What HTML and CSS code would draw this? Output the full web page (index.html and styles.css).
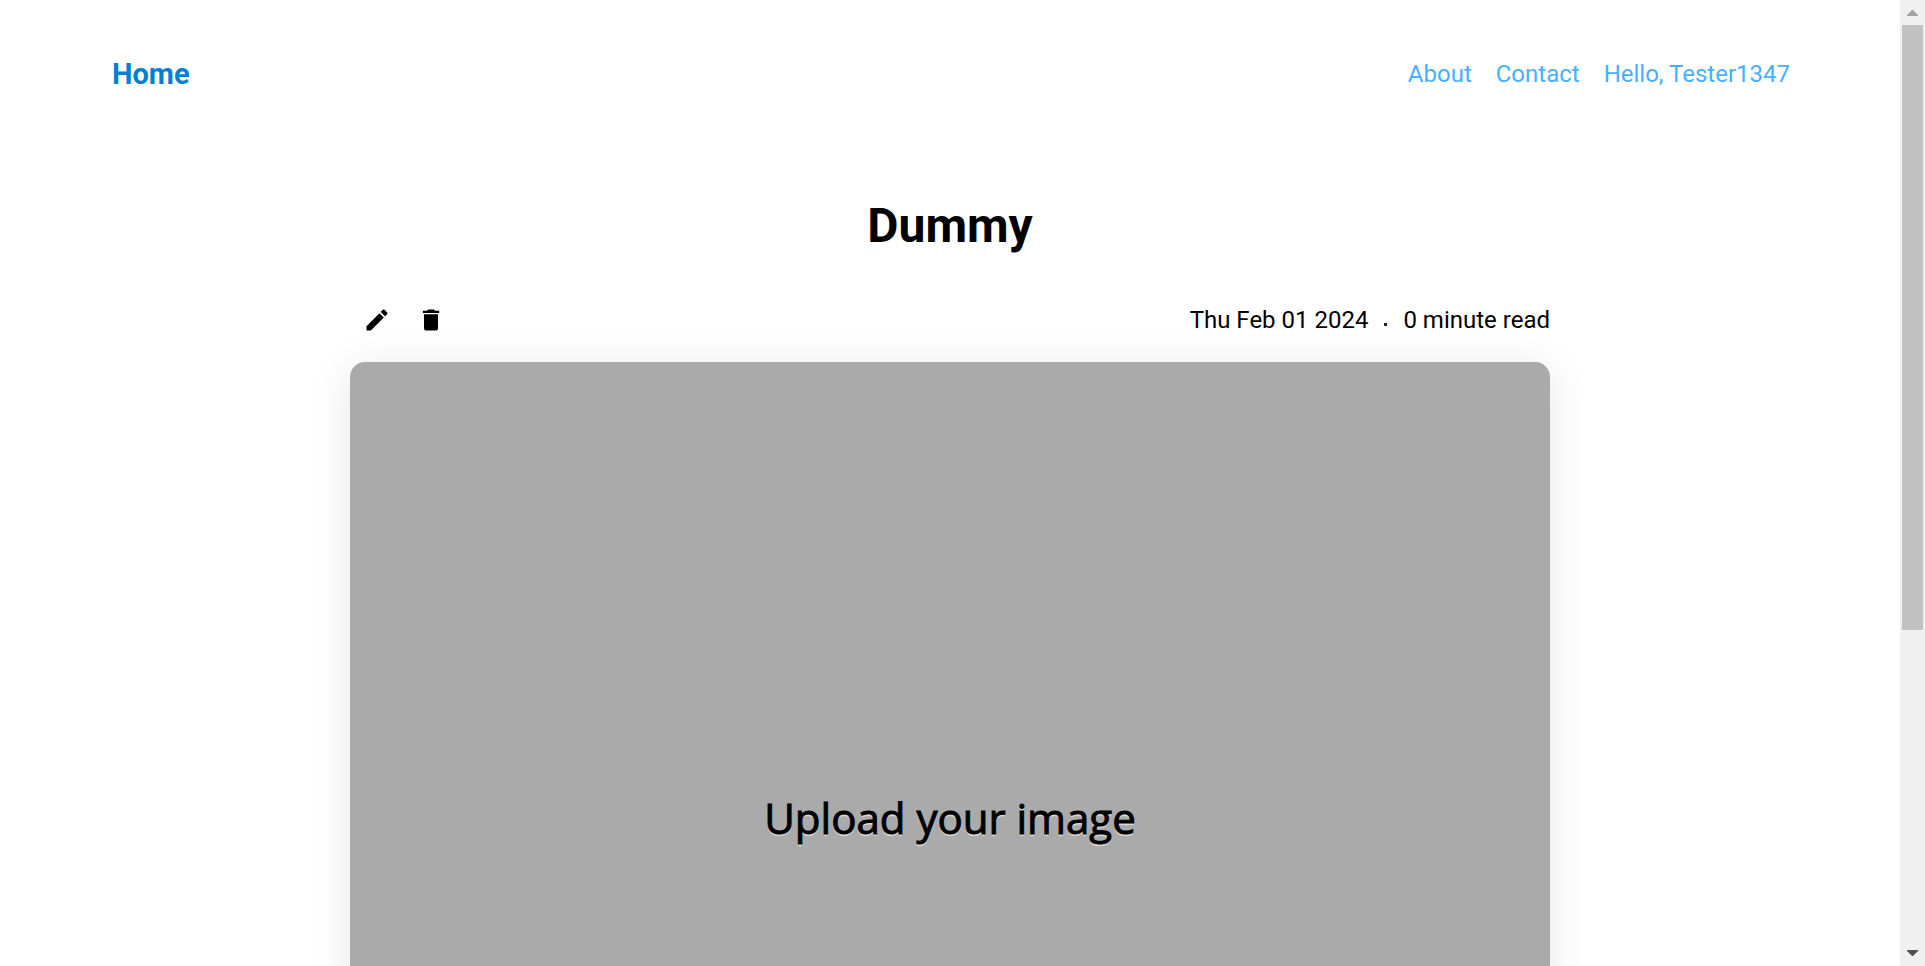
FILE: index.html
```
<!DOCTYPE html>
<html lang="en">
<head>
<meta charset="utf-8">
<title>Dummy</title>
<link rel="stylesheet" href="styles.css">
</head>
<body>
<div class="viewport">
  <div class="page">
    <header class="header">
      <a class="brand" href="#">Home</a>
      <nav class="nav">
        <a href="#">About</a>
        <a href="#">Contact</a>
        <a href="#">Hello, Tester1347</a>
      </nav>
    </header>
    <main class="post">
      <h1 class="title">Dummy</h1>
      <div class="toolbar">
        <div class="actions">
          <button class="icon-button" type="button" aria-label="Edit">
            <svg viewBox="0 0 24 24" aria-hidden="true"><path d="M3 17.25V21h3.75L17.81 9.94l-3.75-3.75L3 17.25zM20.71 7.04c.39-.39.39-1.02 0-1.41l-2.34-2.34c-.39-.39-1.02-.39-1.41 0l-1.83 1.83 3.75 3.75 1.83-1.83z"/></svg>
          </button>
          <button class="icon-button" type="button" aria-label="Delete">
            <svg viewBox="0 0 24 24" aria-hidden="true"><path d="M6 19c0 1.1.9 2 2 2h8c1.1 0 2-.9 2-2V7H6v12zM19 4h-3.5l-1-1h-5l-1 1H5v2h14V4z"/></svg>
          </button>
        </div>
        <div class="meta">
          <span>Thu Feb 01 2024</span>
          <span class="dot"></span>
          <span>0 minute read</span>
        </div>
      </div>
      <div class="cover"><span class="cover-text">Upload your image</span></div>
    </main>
  </div>
  <div class="scrollbar" aria-hidden="true">
    <svg class="arrow arrow-up" viewBox="0 0 11 6"><path d="M5 0h1l5 5v1H0V5z"/></svg>
    <div class="track"><div class="thumb"></div></div>
    <svg class="arrow arrow-down" viewBox="0 0 11 6"><path d="M0 0h11v1L6 6H5L0 1z"/></svg>
  </div>
</div>
</body>
</html>
```
FILE: styles.css
```
* {
  box-sizing: border-box;
}

body {
  margin: 0;
  background: #fff;
  color: #000;
  font-family: Roboto, sans-serif;
  font-size: 24px;
  line-height: 28px;
}

.viewport {
  display: flex;
  height: 100vh;
  overflow: hidden;
}

.page {
  flex: 1;
  overflow: hidden;
}

.header {
  display: flex;
  align-items: center;
  justify-content: space-between;
  padding: 56px 110px 56px 112px;
}

.header a {
  text-decoration: none;
}

.brand {
  color: #0080d5;
  font-size: 29px;
  font-weight: 700;
  line-height: 36px;
}

.nav {
  display: flex;
  gap: 24px;
}

.nav a {
  color: #47b0ff;
}

.post {
  max-width: 1200px;
  margin: 0 auto;
}

.title {
  margin: 50px 0 39px;
  font-size: 48px;
  font-weight: 700;
  line-height: 56px;
  text-align: center;
}

.toolbar {
  display: flex;
  align-items: center;
  justify-content: space-between;
  margin-bottom: 15px;
}

.actions {
  display: flex;
}

.icon-button {
  display: block;
  padding: 13px;
  border: 0;
  background: none;
  cursor: pointer;
}

.icon-button svg {
  display: block;
  width: 28px;
  height: 28px;
}

.meta {
  display: flex;
  align-items: center;
  gap: 16px;
}

.dot {
  width: 3px;
  height: 3px;
  margin-top: 8px;
  background: #222;
}

.cover {
  display: flex;
  align-items: center;
  justify-content: center;
  height: 912px;
  border-radius: 15px;
  background: #aaa;
  box-shadow: 0 5px 40px rgba(0, 0, 0, 0.1);
}

.cover-text {
  font-family: "Open Sans", "Noto Sans", sans-serif;
  font-size: 42px;
  font-weight: 500;
  line-height: 56px;
  text-shadow: 0 2px 1px #ddd;
  -webkit-text-stroke: 1px #000;
}

.scrollbar {
  display: flex;
  flex-direction: column;
  align-items: center;
  width: 25px;
  background: #f0f0f0;
}

.arrow {
  width: 11px;
  height: 6px;
}

.arrow-up {
  margin: 10px 0 9px;
  fill: #a3a3a3;
}

.arrow-down {
  margin: 9px 0 10px;
  fill: #505050;
}

.track {
  flex: 1;
  align-self: stretch;
  padding: 0 2px;
}

.thumb {
  height: 66%;
  background: #c1c1c1;
}
```
